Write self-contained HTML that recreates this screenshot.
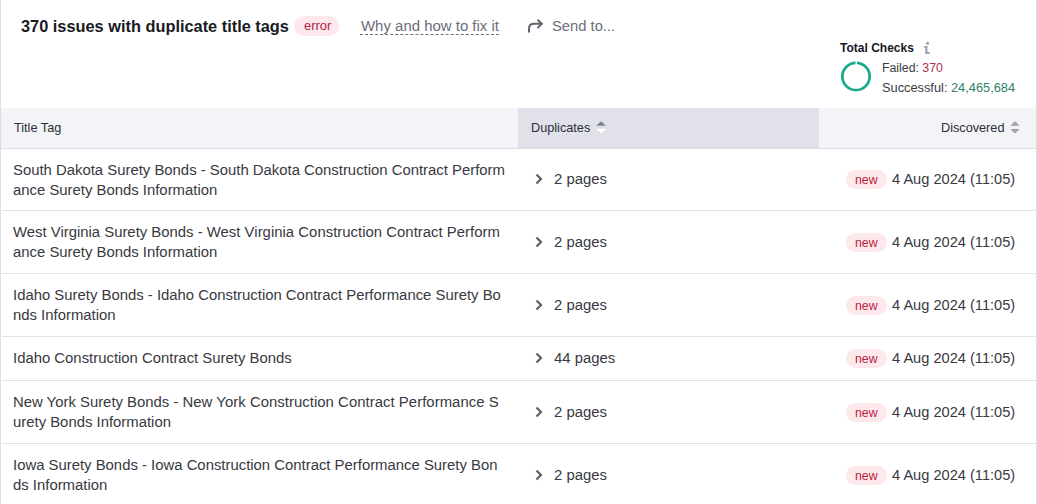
<!DOCTYPE html>
<html>
<head>
<meta charset="utf-8">
<style>
html, body { margin: 0; padding: 0; }
body {
  width: 1037px; height: 504px; overflow: hidden; position: relative;
  background: #ffffff;
  font-family: "Liberation Sans", sans-serif;
  color: #191b23;
}
.abs { position: absolute; white-space: nowrap; }
.bl { position: absolute; left: 0; top: 0; width: 1px; height: 504px; background: #dedee2; }
.br { position: absolute; left: 1036px; top: 0; width: 1px; height: 504px; background: #dedee2; }

.title { left: 21px; top: 15px; font-size: 16.35px; font-weight: 700; line-height: 22px; color: #191b23; }
.badge-err { left: 294px; top: 16px; width: 45px; height: 20px; border-radius: 10px; background: #fde9ed; }
.badge-err span { position: absolute; left: 10px; top: 0; line-height: 20px; font-size: 12.95px; color: #b01f44; }
.why { left: 361px; top: 16px; font-size: 14.96px; line-height: 20px; color: #6c6e79; }
.why-ul { left: 360px; top: 34px; width: 139px; height: 0; border-top: 1px dashed #6c6e79; }
.send { left: 552px; top: 16px; font-size: 14.75px; line-height: 20px; color: #6c6e79; }

.tc { left: 840px; top: 40px; font-size: 12.03px; font-weight: 700; line-height: 16px; color: #191b23; }
.fail { left: 882px; top: 59px; font-size: 12.3px; line-height: 18px; color: #3a3c46; }
.succ { left: 882px; top: 79px; font-size: 12.8px; line-height: 18px; color: #3a3c46; }

.thead { position: absolute; left: 1px; top: 108px; width: 1035px; height: 40px; background: #f3f4f8; border-bottom: 1px solid #dfe0e4; }
.thdup { position: absolute; left: 518px; top: 108px; width: 301px; height: 40px; background: #e0e1e9; }
.th { position: absolute; font-size: 12.7px; line-height: 18px; color: #2c2d35; top: 119px; }

.row { position: absolute; left: 2px; width: 1034px; border-bottom: 1px solid #e1e1e6; }
.cell { position: absolute; font-size: 14.88px; line-height: 20px; color: #383941; white-space: nowrap; }
.new { position: absolute; width: 41px; height: 19px; border-radius: 10px; background: #fde8ec; }
.new span { position: absolute; left: 9px; top: 1px; line-height: 19px; font-size: 12.3px; color: #b8243f; }
</style>
</head>
<body>
<div class="bl"></div>
<div class="br"></div>

<div class="abs title">370 issues with duplicate title tags</div>
<div class="abs badge-err"><span>error</span></div>
<div class="abs why">Why and how to fix it</div>
<div class="abs why-ul"></div>
<svg class="abs" style="left:526px;top:17px" width="18" height="18" viewBox="0 0 18 18">
  <path d="M3 14.8 V11.8 Q3 6.85 8 6.85 H15.5" fill="none" stroke="#62636c" stroke-width="2" stroke-linecap="round"/>
  <path d="M12 3.2 L15.8 6.85 L12 10.5" fill="none" stroke="#62636c" stroke-width="2" stroke-linecap="round" stroke-linejoin="miter"/>
</svg>
<div class="abs send">Send to...</div>

<div class="abs tc">Total Checks</div>
<svg class="abs" style="left:920px;top:40px" width="14" height="16" viewBox="920 40 14 16">
  <circle cx="927.5" cy="43.3" r="1.55" fill="#9ea0aa"/>
  <rect x="924" y="46.1" width="3.4" height="1.6" fill="#9ea0aa"/>
  <rect x="925.3" y="46.1" width="2.1" height="7.7" fill="#9ea0aa"/>
  <rect x="925.3" y="52.1" width="4.6" height="1.7" fill="#9ea0aa"/>
</svg>
<svg class="abs" style="left:836px;top:56px" width="40" height="40" viewBox="0 0 40 40">
  <circle cx="20" cy="20.5" r="13.65" fill="none" stroke="#19aa87" stroke-width="2.7" stroke-dasharray="0 1 83.76 1" transform="rotate(-90 20 20.5)"/>
</svg>
<div class="abs fail">Failed: <span style="color:#ad3049">370</span></div>
<div class="abs succ">Successful: <span style="color:#2f7f6c">24,465,684</span></div>

<div class="thead"></div>
<div class="thdup"></div>
<div class="th" style="left:14px">Title Tag</div>
<div class="th" style="left:531px">Duplicates</div>
<svg class="abs" style="left:595px;top:120px" width="12" height="15" viewBox="0 0 12 15">
  <path d="M1.2 5.8 L6 1.3 L10.8 5.8 Z" fill="#7d7f89"/>
  <path d="M1.2 9 L6 13.4 L10.8 9 Z" fill="#ffffff"/>
</svg>
<div class="th" style="left:941px">Discovered</div>
<svg class="abs" style="left:1009px;top:120px" width="12" height="15" viewBox="0 0 12 15">
  <path d="M1.2 5.8 L6 1.3 L10.8 5.8 Z" fill="#a0a2ac"/>
  <path d="M1.2 9 L6 13.4 L10.8 9 Z" fill="#a0a2ac"/>
</svg>

<!-- rows -->
<div class="row" style="top:149px;height:61px"></div>
<div class="row" style="top:211px;height:62px"></div>
<div class="row" style="top:274px;height:62px"></div>
<div class="row" style="top:337px;height:43px"></div>
<div class="row" style="top:381px;height:62px"></div>
<div class="row" style="top:444px;height:62px"></div>

<!-- row 1 -->
<div class="cell" style="left:13px;top:160px">South Dakota Surety Bonds - South Dakota Construction Contract Perform<br>ance Surety Bonds Information</div>
<div class="cell" style="left:554px;top:169px">2 pages</div>
<div class="new" style="left:846px;top:170px"><span>new</span></div>
<div class="cell" style="left:892px;top:169px;font-size:14.62px">4 Aug 2024 (11:05)</div>

<!-- row 2 -->
<div class="cell" style="left:13px;top:222px">West Virginia Surety Bonds - <span style="letter-spacing:0.025px">West Virginia Construction Contract Perform</span><br>ance Surety Bonds Information</div>
<div class="cell" style="left:554px;top:232px">2 pages</div>
<div class="new" style="left:846px;top:233px"><span>new</span></div>
<div class="cell" style="left:892px;top:232px;font-size:14.62px">4 Aug 2024 (11:05)</div>

<!-- row 3 -->
<div class="cell" style="left:13px;top:285px">Idaho Surety Bonds - Idaho Construction Contract Performance Surety Bo<br>nds Information</div>
<div class="cell" style="left:554px;top:295px">2 pages</div>
<div class="new" style="left:846px;top:296px"><span>new</span></div>
<div class="cell" style="left:892px;top:295px;font-size:14.62px">4 Aug 2024 (11:05)</div>

<!-- row 4 -->
<div class="cell" style="left:13px;top:348px">Idaho Construction Contract Surety Bonds</div>
<div class="cell" style="left:554px;top:348px">44 pages</div>
<div class="new" style="left:846px;top:349px"><span>new</span></div>
<div class="cell" style="left:892px;top:348px;font-size:14.62px">4 Aug 2024 (11:05)</div>

<!-- row 5 -->
<div class="cell" style="left:13px;top:392px">New York Surety Bonds - <span style="letter-spacing:0.045px">New York Construction Contract Performance S</span><br>urety Bonds Information</div>
<div class="cell" style="left:554px;top:402px">2 pages</div>
<div class="new" style="left:846px;top:403px"><span>new</span></div>
<div class="cell" style="left:892px;top:402px;font-size:14.62px">4 Aug 2024 (11:05)</div>

<!-- row 6 -->
<div class="cell" style="left:13px;top:455px">Iowa Surety Bonds - Iowa Construction Contract Performance Surety Bon<br>ds Information</div>
<div class="cell" style="left:554px;top:465px">2 pages</div>
<div class="new" style="left:846px;top:466px"><span>new</span></div>
<div class="cell" style="left:892px;top:465px;font-size:14.62px">4 Aug 2024 (11:05)</div>

<!-- chevrons -->
<svg class="abs" style="left:534px;top:173px" width="10" height="12" viewBox="0 0 10 12"><path d="M2.5 1.5 L7 6 L2.5 10.5" fill="none" stroke="#5f6068" stroke-width="2.2"/></svg>
<svg class="abs" style="left:534px;top:236px" width="10" height="12" viewBox="0 0 10 12"><path d="M2.5 1.5 L7 6 L2.5 10.5" fill="none" stroke="#5f6068" stroke-width="2.2"/></svg>
<svg class="abs" style="left:534px;top:299px" width="10" height="12" viewBox="0 0 10 12"><path d="M2.5 1.5 L7 6 L2.5 10.5" fill="none" stroke="#5f6068" stroke-width="2.2"/></svg>
<svg class="abs" style="left:534px;top:352px" width="10" height="12" viewBox="0 0 10 12"><path d="M2.5 1.5 L7 6 L2.5 10.5" fill="none" stroke="#5f6068" stroke-width="2.2"/></svg>
<svg class="abs" style="left:534px;top:406px" width="10" height="12" viewBox="0 0 10 12"><path d="M2.5 1.5 L7 6 L2.5 10.5" fill="none" stroke="#5f6068" stroke-width="2.2"/></svg>
<svg class="abs" style="left:534px;top:469px" width="10" height="12" viewBox="0 0 10 12"><path d="M2.5 1.5 L7 6 L2.5 10.5" fill="none" stroke="#5f6068" stroke-width="2.2"/></svg>
</body>
</html>
